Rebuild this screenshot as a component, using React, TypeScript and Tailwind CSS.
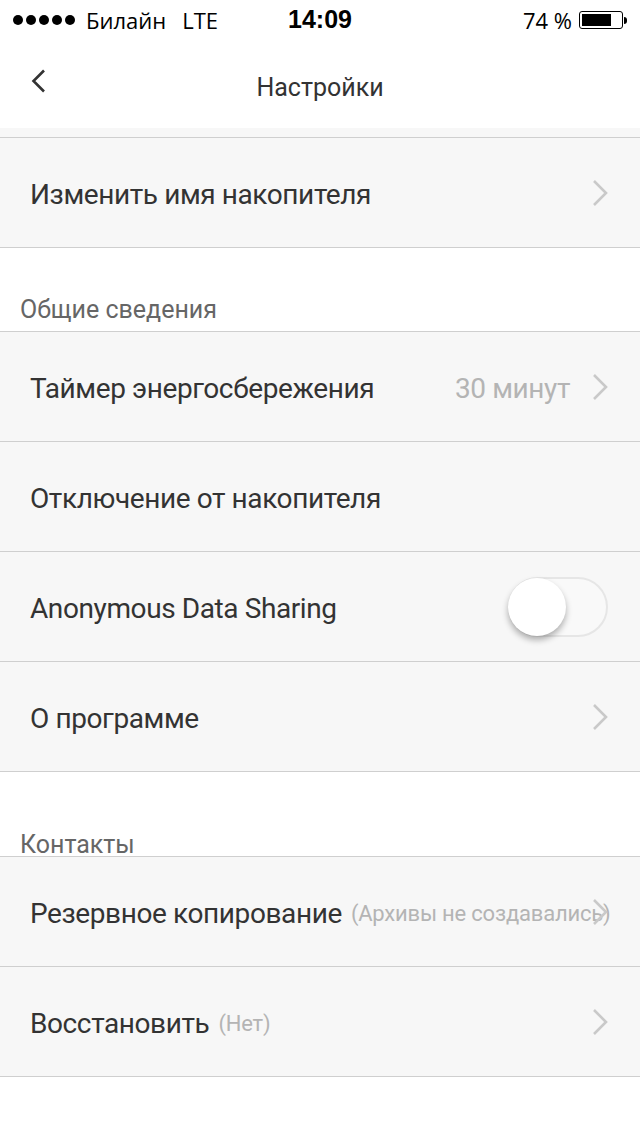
import React from "react";

const font = { fontFamily: "Roboto, 'Noto Sans', sans-serif" };

function Chevron() {
  return (
    <svg width="16" height="27" viewBox="0 0 16 27" className="absolute right-[32px] top-1/2 -translate-y-1/2">
      <path d="M2 1.5 L14 13.5 L2 25.5" fill="none" stroke="#c9c9c9" strokeWidth="2.6" />
    </svg>
  );
}

function StatusBar() {
  return (
    <div className="flex h-[40px] items-center bg-white px-[13px] text-[22px] text-black" style={{ fontFamily: "'Open Sans', sans-serif" }}>
      <div className="flex w-[230px] items-center">
        <div className="flex gap-[3px]">
          {[0, 1, 2, 3, 4].map((i) => (
            <span key={i} className="h-[10px] w-[10px] rounded-full bg-black" />
          ))}
        </div>
        <span className="ml-[11px]">Билайн</span>
        <span className="ml-[16px]">LTE</span>
      </div>
      <div className="flex-1 text-center text-[25px] font-bold" style={{ fontFamily: "'Liberation Sans', sans-serif" }}>
        14:09
      </div>
      <div className="flex w-[230px] items-center justify-end">
        <span>74 %</span>
        <div className="ml-[7px] flex items-center">
          <div className="flex h-[18px] w-[44px] items-center rounded-[3px] border border-black p-[2px]">
            <div className="h-full w-[29px] bg-black" />
          </div>
          <div className="ml-[1px] h-[7px] w-[3px] rounded-r-sm bg-black" />
        </div>
      </div>
    </div>
  );
}

function Row({
  label,
  value,
  hint,
  chevron = true,
  toggle = false,
}: {
  label: string;
  value?: string;
  hint?: string;
  chevron?: boolean;
  toggle?: boolean;
}) {
  return (
    <div className="relative flex h-[110px] items-center border-b border-[#cfcfcf] bg-[#f7f7f7] pl-[30px] pr-[32px]">
      <span className="whitespace-nowrap pt-[4px] text-[28px] tracking-[-0.4px] text-[#333]">{label}</span>
      {hint && (
        <span className="ml-[9px] whitespace-nowrap pt-[4px] text-[22px] tracking-[-0.2px] text-[#b4b4b4]">{hint}</span>
      )}
      <div className="flex-1" />
      {value && <span className="mr-[38px] pt-[4px] text-[28px] tracking-[-0.4px] text-[#b4b4b4]">{value}</span>}
      {toggle && (
        <div className="relative h-[60px] w-[100px] rounded-full border-2 border-[#e6e6e6] bg-[#f9f9f9]">
          <div className="absolute left-[-2px] top-[-1px] h-[58px] w-[58px] rounded-full bg-white shadow-[0_4px_6px_rgba(0,0,0,0.3)]" />
        </div>
      )}
      {chevron && <Chevron />}
    </div>
  );
}

export default function App() {
  return (
    <div className="min-h-[1136px] w-[640px] bg-white" style={font}>
      <StatusBar />

      {/* nav bar */}
      <div className="relative flex h-[88px] items-center justify-center bg-white pt-[8px]">
        <svg width="16" height="24" viewBox="0 0 16 24" className="absolute left-[31px] top-[29px]">
          <path d="M13 1.5 L2.5 12 L13 22.5" fill="none" stroke="#333" strokeWidth="2.6" />
        </svg>
        <span className="text-[25px] text-[#333]">Настройки</span>
      </div>

      <div className="h-[10px] border-b border-[#cfcfcf] bg-[#f7f7f7]" />
      <Row label="Изменить имя накопителя" />

      <div className="h-[84px] border-b border-[#cfcfcf] pl-[20px] pt-[49px]">
        <span className="block text-[25px] leading-none text-[#666]">Общие сведения</span>
      </div>
      <Row label="Таймер энергосбережения" value="30 минут" />
      <Row label="Отключение от накопителя" chevron={false} />
      <Row label="Anonymous Data Sharing" chevron={false} toggle />
      <Row label="О программе" />

      <div className="h-[85px] border-b border-[#cfcfcf] pl-[20px] pt-[60px]">
        <span className="block text-[25px] leading-none text-[#666]">Контакты</span>
      </div>
      <Row label="Резервное копирование" hint="(Архивы не создавались)" />
      <Row label="Восстановить" hint="(Нет)" />
    </div>
  );
}
